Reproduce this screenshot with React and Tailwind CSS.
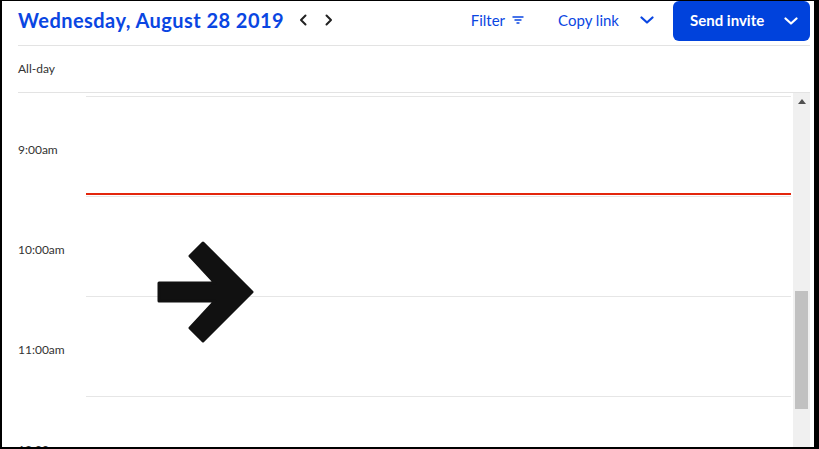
import React from 'react';

const hours = ['9:00am', '10:00am', '11:00am', '12:00pm'];

function ChevronDown({ className }) {
  return (
    <svg className={className} width="14" height="8" viewBox="0 0 14 8" fill="none" stroke="currentColor" strokeWidth="2.2" strokeLinecap="round" strokeLinejoin="round">
      <path d="M1.5 1.5 7 6.5l5.5-5" />
    </svg>
  );
}

export default function App() {
  return (
    <div className="relative w-[819px] h-[449px] bg-white border-black border-l-2 border-t border-r-[5px] border-b-2 overflow-hidden flex flex-col font-['Lato',sans-serif]">
      {/* Header */}
      <div className="h-[45px] ml-4 mr-1 border-b border-[#e3e3e3] shrink-0">
        <div className="h-[40px] flex items-center">
          <h1 className="relative -top-[1px] text-[20px] font-bold text-[#0a46e2] tracking-[0.45px]">Wednesday, August 28 2019</h1>
          <div className="relative -top-[1px] flex items-center gap-[16px] ml-[15px] text-[#222]">
            <svg width="9" height="12" viewBox="0 0 9 12" fill="none" stroke="currentColor" strokeWidth="2" strokeLinecap="round" strokeLinejoin="round">
              <path d="M6.5 1.5 2 6l4.5 4.5" />
            </svg>
            <svg width="9" height="12" viewBox="0 0 9 12" fill="none" stroke="currentColor" strokeWidth="2" strokeLinecap="round" strokeLinejoin="round">
              <path d="M2.5 1.5 7 6l-4.5 4.5" />
            </svg>
          </div>

          <div className="ml-auto flex items-center h-full text-[15px] text-[#0a46e2]">
            <span className="relative -top-[1px]">Filter</span>
            <svg className="ml-[7px] relative -top-[1px]" width="12" height="10" viewBox="0 0 12 10" fill="none" stroke="currentColor" strokeWidth="1.4" strokeLinecap="round">
              <path d="M1 2h10M3 5h6M5 8h2" />
            </svg>
            <span className="ml-[34px] relative -top-[1px]">Copy link</span>
            <ChevronDown className="ml-[21px] relative -top-[1px]" />
            <button className="ml-[19px] h-[40px] w-[137px] rounded-[6px] bg-[#0042dc] text-white flex items-center pl-[17px] pr-[12px] -mt-[1px]">
              <span className="text-[15px] font-bold">Send invite</span>
              <ChevronDown className="ml-auto" />
            </button>
          </div>
        </div>
      </div>

      {/* All-day */}
      <div className="h-[47px] ml-4 mr-1 border-b border-[#e3e3e3] flex items-center shrink-0">
        <span className="text-[12px] text-[#333]">All-day</span>
      </div>

      {/* Time grid */}
      <div className="flex-1 ml-4 mr-1 flex min-h-0 overflow-hidden">
        <div className="flex-1 pt-[3px] pr-[2px]">
          {hours.map((h, i) => (
            <div key={h} className="flex h-[100px]">
              <div className="w-[68px] pt-[46px] text-[12px] leading-[16px] text-[#333]">{h}</div>
              <div className="relative flex-1 border-t border-[#e6e6e6]">
                {i === 0 && <div className="absolute left-0 right-0 top-[96px] h-[2px] bg-[#e3260c]" />}
              </div>
            </div>
          ))}
        </div>
        <div className="w-[17px] bg-[#f0f0f0] flex flex-col items-center shrink-0">
          <svg className="mt-[6px]" width="8" height="5" viewBox="0 0 8 5">
            <path d="M4 0 8 5H0z" fill="#505050" />
          </svg>
          <div className="mt-[187px] w-[13px] h-[118px] bg-[#c1c1c1]" />
        </div>
      </div>

      {/* Arrow overlay */}
      <svg className="absolute left-[-2px] top-[-1px] pointer-events-none" width="819" height="449" viewBox="0 0 819 449">
        <path
          d="M252 292 203 243 190 256 215 283H159V301H215L190 328 203 341Z"
          fill="#111"
          stroke="#111"
          strokeWidth="3"
          strokeLinejoin="round"
        />
      </svg>
    </div>
  );
}
